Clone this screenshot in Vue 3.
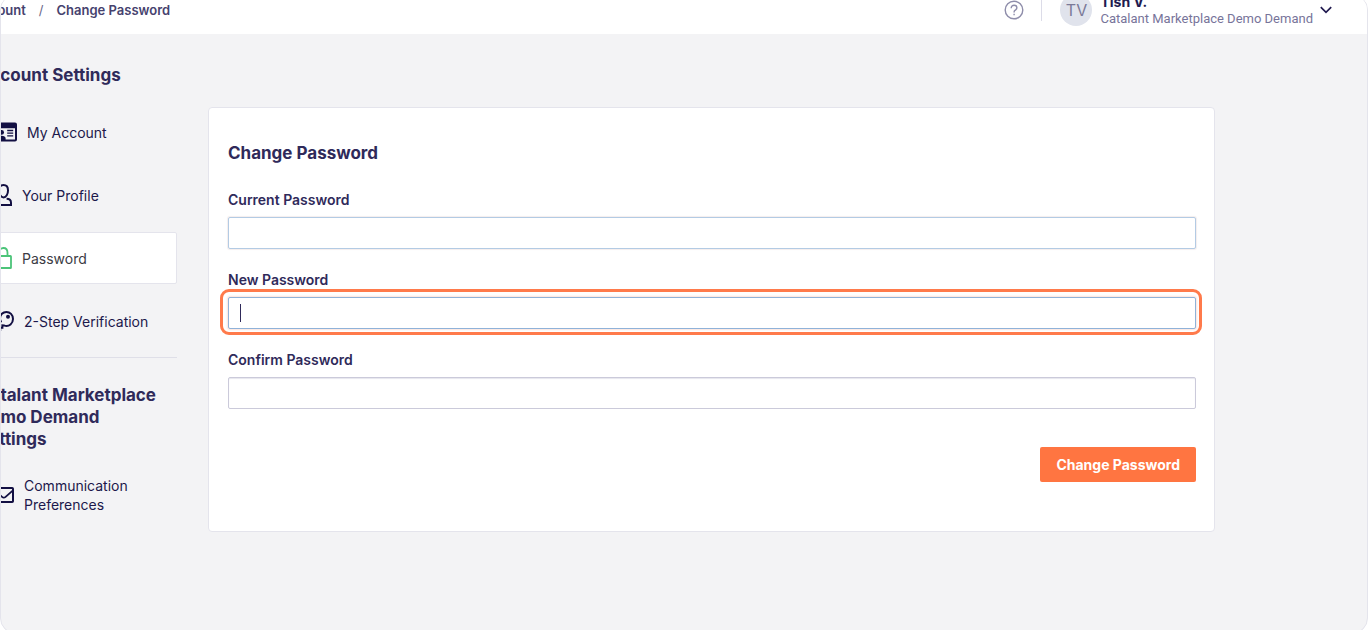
<script setup>
import { ref } from 'vue'

const current = ref('')
const next = ref('')
const confirm = ref('')
</script>

<template>
  <div class="viewport">
    <div class="frame">
      <header class="topbar">
        <nav class="crumbs" aria-label="Breadcrumb">
          <a href="#account">Account</a>
          <span class="slash">/</span>
          <a href="#password">Change Password</a>
        </nav>
        <button class="help" type="button" aria-label="Help">
          <svg width="20" height="20" viewBox="0 0 20 20" fill="none" stroke="#8e8daa" stroke-width="1.4">
            <circle cx="10" cy="10" r="8.8" />
            <path d="M7.2 8.2c0-1.8 1.2-2.9 2.9-2.9s2.8 1 2.8 2.5c0 1.3-.8 1.8-1.6 2.4-.8.5-1.2.9-1.2 1.9v.4" />
            <path d="M10.1 13.7v1.5" />
          </svg>
        </button>
        <span class="divider"></span>
        <span class="avatar">TV</span>
        <div class="who">
          <strong>Tish V.</strong>
          <span>Catalant Marketplace Demo Demand</span>
        </div>
        <button class="caret-btn" type="button" aria-label="Open user menu">
          <svg width="14" height="10" viewBox="0 0 14 10" fill="none" stroke="#211a50" stroke-width="1.7">
            <path d="M1.8 2.2 7 7.4l5.2-5.2" />
          </svg>
        </button>
      </header>

      <div class="layout">
        <aside class="sidebar">
          <h2>Account Settings</h2>
          <nav class="menu" aria-label="Account settings">
            <a class="item" href="#my-account">
              <svg width="22" height="20" viewBox="0 0 22 20">
                <rect x="1" y="1.6" width="20" height="16.8" rx="1" fill="none" stroke="#120f42" stroke-width="2" />
                <path d="M1 1.6h20v4.6H1z" fill="#120f42" />
                <circle cx="6.6" cy="10.4" r="2.4" fill="#120f42" />
                <path d="M2.4 18v-1.6c0-1.8 1.8-2.6 4.2-2.6s4 .8 4 2.6V18z" fill="#120f42" />
                <path d="M12.2 8.5h6M12.2 11.2h6M12.2 13.9h6" stroke="#120f42" stroke-width="1.3" />
              </svg>
              My Account
            </a>
            <a class="item" href="#profile">
              <svg width="17" height="22" viewBox="0 0 17 22" fill="none" stroke="#120f42" stroke-width="2">
                <path d="M8.500 1C5.600 1 4 3 4 6.400 4 10 5.800 13.400 8.500 13.400S13 10 13 6.400C13 3 11.400 1 8.500 1z" />
                <path d="M5.400 14.800c-3 0-4.400 1-4.400 4V21h15v-2.200c0-3-1.400-4-4.400-4" />
              </svg>
              Your Profile
            </a>
            <a class="item active" href="#password" aria-current="page">
              <svg width="17" height="22" viewBox="0 0 17 22" fill="none" stroke="#4cc479" stroke-width="1.8">
                <rect x="1" y="9" width="15" height="12" rx=".6" />
                <path d="M4 9V5.800C4 3 5.700 1 8.500 1s4 2 4 4.800V9" />
              </svg>
              Password
            </a>
            <a class="item" href="#two-step">
              <svg width="19" height="22" viewBox="0 0 19 22" fill="none" stroke="#120f42" stroke-width="2">
                <path d="M9.400 15.600c4.900 1.400 8.600-2.400 8.600-6.600C18 4.800 15 2 11.400 2S5 4.800 5 8.200c0 1.400.3 2.400.8 3.200L1 16.600V20h4.200v-2.200h2.200v-2.400z" />
                <circle cx="13" cy="6.800" r="2" fill="#120f42" stroke="none" />
              </svg>
              2-Step Verification
            </a>
          </nav>
          <hr />
          <h2>Catalant Marketplace Demo Demand Settings</h2>
          <nav class="menu second" aria-label="Marketplace settings">
            <a class="item" href="#communication">
              <svg width="19" height="18" viewBox="0 0 19 18" fill="none" stroke="#120f42" stroke-width="2">
                <rect x="1" y="2" width="17" height="14" rx=".8" />
                <path d="m2 6.200 5 4.600q1.800 1.600 3.600 0L17.400 4.800" stroke-width="1.8" />
              </svg>
              <span>Communication Preferences</span>
            </a>
          </nav>
        </aside>

        <main class="card">
          <h1>Change Password</h1>
          <form @submit.prevent>
            <div class="field">
              <label for="current">Current Password</label>
              <div class="control">
                <input id="current" v-model="current" class="tinted" type="password" autocomplete="off" />
              </div>
            </div>
            <div class="field">
              <label for="next">New Password</label>
              <div class="control">
                <input id="next" v-model="next" class="focused" type="password" autocomplete="off" />
                <span class="cursor"></span>
                <span class="ring"></span>
              </div>
            </div>
            <div class="field">
              <label for="confirm">Confirm Password</label>
              <div class="control">
                <input id="confirm" v-model="confirm" type="password" autocomplete="off" />
              </div>
            </div>
            <button class="submit" type="submit">Change Password</button>
          </form>
        </main>
      </div>
    </div>
  </div>
</template>

<style>
body {
  margin: 0;
  background: #fff;
}
</style>

<style scoped>
* {
  box-sizing: border-box;
}
.viewport {
  height: 100vh;
  overflow: hidden;
  display: flex;
  font-family: Inter, "Liberation Sans", sans-serif;
  color: #2f2a5a;
}
.frame {
  flex: 1;
  min-width: 0;
  margin: -6px 4px -4px 0;
  border: 1px solid #e4e4ec;
  border-radius: 16px;
  background: #f3f3f5;
  overflow: hidden;
}
.topbar {
  display: flex;
  align-items: center;
  height: 39px;
  padding: 0 34px 10px 0;
  background: #fff;
}
.crumbs {
  display: flex;
  flex: 1;
  gap: 13px;
  margin-left: -28px;
  font-size: 13px;
  font-weight: 600;
  white-space: nowrap;
}
.crumbs a {
  color: #46426e;
  text-decoration: none;
}
.slash {
  color: #6a6788;
  font-weight: 400;
}
button {
  border: 0;
  padding: 0;
  background: none;
  font-family: inherit;
}
.help svg,
.caret-btn svg {
  display: block;
}
.divider {
  width: 1px;
  height: 22px;
  margin: 0 18px 0 17px;
  background: #dcdce8;
}
.avatar {
  flex: none;
  width: 32px;
  height: 32px;
  border-radius: 50%;
  background: #e0e3ec;
  color: #7b7a98;
  font-size: 16px;
  line-height: 32px;
  text-align: center;
}
.who {
  display: flex;
  flex-direction: column;
  margin: 0 6px 0 8px;
  font-family: Roboto, sans-serif;
  font-size: 13px;
  line-height: 17px;
  color: #77749a;
  white-space: nowrap;
}
.who strong {
  font-family: Inter, sans-serif;
  font-size: 14px;
  color: #211a50;
}
.layout {
  display: flex;
  align-items: flex-start;
  gap: 31px;
  padding: 0 152px 0 0;
}
.sidebar {
  flex: none;
  width: 200px;
  margin-left: -24px;
  padding-top: 30px;
}
h1,
h2 {
  margin: 0;
  font-size: 17px;
  font-weight: 700;
  line-height: 22px;
  color: #2f2a5a;
}
h2 {
  padding: 0 16px 0 1px;
}
.menu {
  display: flex;
  flex-direction: column;
  gap: 11px;
  margin-top: 20px;
}
.item {
  display: flex;
  align-items: center;
  gap: 10px;
  min-height: 52px;
  padding: 0 17px;
  border: 1px solid transparent;
  border-radius: 2px;
  font-size: 14px;
  line-height: 19px;
  color: #1c184b;
  text-decoration: none;
}
.item svg {
  flex: none;
}
.item.active {
  background: #fff;
  border-color: #e4e4ec;
  color: #3c3c44;
}
hr {
  height: 1px;
  margin: 10px 0 26px;
  border: 0;
  background: #dfdfe8;
}
.menu.second {
  margin-top: 19px;
}
.card {
  flex: 1;
  min-width: 0;
  margin-top: 73px;
  padding: 34px 18px 49px 19px;
  border: 1px solid #e4e4ec;
  border-radius: 4px;
  background: #fff;
}
h1 {
  margin-bottom: 26px;
}
form {
  display: flex;
  flex-direction: column;
}
.field {
  margin-bottom: 21px;
}
label {
  display: block;
  margin-bottom: 7px;
  font-size: 14px;
  font-weight: 600;
  line-height: 20px;
}
.control {
  position: relative;
}
input {
  display: block;
  width: 100%;
  height: 32px;
  padding: 0 12px;
  border: 1px solid #cbcada;
  border-radius: 2px;
  background: #fff;
  box-shadow: inset 0 1px 1px #e6e6ee;
  color: #2f2a5a;
  font: 14px Inter, sans-serif;
  outline: none;
}
.tinted {
  border-color: #b3cbe4;
  box-shadow: 0 0 1px 1px #f4eeee;
}
.focused {
  border-color: #8fb2d9;
  box-shadow: 0 0 2px 1px #fbe3dc;
}
.cursor {
  position: absolute;
  top: 7px;
  left: 12px;
  width: 1px;
  height: 18px;
  background: #2f2a5a;
}
.ring {
  position: absolute;
  inset: -8px -6px -6px -8px;
  border: 3px solid #ff7a4b;
  border-radius: 9px;
  pointer-events: none;
}
.submit {
  align-self: flex-end;
  height: 35px;
  margin-top: 17px;
  padding: 0 16px;
  border-radius: 2px;
  background: #ff7541;
  color: #fff;
  font-size: 14px;
  font-weight: 700;
}
</style>
